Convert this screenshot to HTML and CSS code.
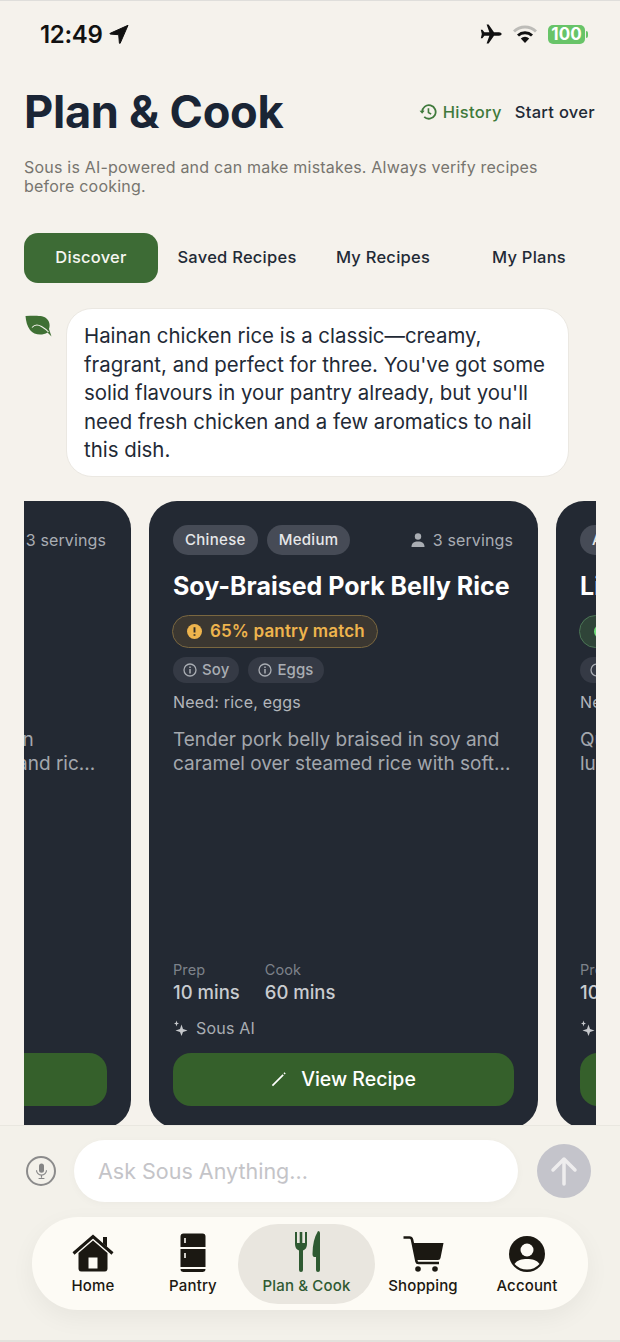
FILE: index.html
```html
<!DOCTYPE html>
<html lang="en">
<head>
<meta charset="utf-8">
<title>Plan &amp; Cook</title>
<link rel="stylesheet" href="styles.css">
</head>
<body>
<div class="screen">
  <div class="status">
    <div class="status-left">
      <span class="time">12:49</span>
      <svg class="loc" viewBox="0 0 20 20"><path d="M19 1.300 1.200 9.300q-.8.5.1.8l8.400.6.700 8.400q.3.900.8.1z" fill="#111" stroke="#111" stroke-width="1" stroke-linejoin="round"/></svg>
    </div>
    <div class="status-right">
      <svg class="plane" viewBox="0 0 22 20"><path d="M21.6 10c0-1-1.2-1.7-2.6-1.7h-5L8.600.4H6.600l2.800 7.900H4.400L2.400 5.700H.8l1 4.300-1 4.300h1.600l2-2.600h5L6.600 19.600h2L14 11.700h5c1.400 0 2.600-.7 2.600-1.700z" fill="#111"/></svg>
      <svg class="wifi" viewBox="0 0 24 18"><path d="M1 6.500A16 16 0 0 1 23 6.500" fill="none" stroke="#bdbcb8" stroke-width="3"/><path d="M5 10.500a10.500 10.500 0 0 1 14 0" fill="none" stroke="#111" stroke-width="3"/><path d="M12 18 7.800 13.500a6 6 0 0 1 8.400 0z" fill="#111"/></svg>
      <div class="battery"><span class="battery-body">100</span><span class="battery-nub"></span></div>
    </div>
  </div>

  <header class="head">
    <div class="head-row">
      <h1>Plan &amp; Cook</h1>
      <div class="head-actions">
        <a class="history">
          <svg class="history-icon" viewBox="0 0 20 20"><path d="M3.500 10a7.500 7.500 0 1 1 2.300 5.400" fill="none" stroke="#3f7a3c" stroke-width="2"/><path d="M.6 8.500h5.600L3.500 12z" fill="#3f7a3c"/><path d="M10.500 5.800v4.700l3 1.800" fill="none" stroke="#3f7a3c" stroke-width="1.800"/></svg>
          History
        </a>
        <a class="start-over">Start over</a>
      </div>
    </div>
    <p class="disclaimer">Sous is AI-powered and can make mistakes. Always verify recipes before cooking.</p>
  </header>

  <nav class="tabs">
    <a class="tab tab-active">Discover</a>
    <a class="tab">Saved Recipes</a>
    <a class="tab">My Recipes</a>
    <a class="tab">My Plans</a>
  </nav>

  <section class="chat">
    <svg class="leaf" viewBox="0 0 27 23"><path d="M.5 1C8 1 18-.5 22 4c3 3 3 7 2 10l2.500 7.500-4-4C17 21 9 20 5 15 2 11 1 6 .5 1z" fill="#3f7034"/><path d="M7 12.500C10 9 14 10 16.500 11.500 19 13 21 14 23.500 17" fill="none" stroke="#f5f2ec" stroke-width="1.100"/></svg>
    <p class="bubble">Hainan chicken rice is a classic—creamy, fragrant, and perfect for three. You've got some solid flavours in your pantry already, but you'll need fresh chicken and a few aromatics to nail this dish.</p>
  </section>

  <section class="carousel">
    <article class="card card-first">
      <div class="card-top">
        <div class="chips"><span class="chip">Chinese</span><span class="chip">Medium</span></div>
        <span class="servings"><svg class="person" viewBox="0 0 14 14"><circle cx="7" cy="3.500" r="3.200" fill="#a9adb3"/><path d="M.5 14c0-4 2.500-5.500 6.500-5.500s6.500 1.500 6.500 5.500z" fill="#a9adb3"/></svg>3 servings</span>
      </div>
      <h2>Hainan Chicken Rice</h2>
      <div class="match match-green"><span class="match-dot match-dot-green"></span>90% pantry match</div>
      <div class="allergens"><span class="allergen">Soy</span></div>
      <p class="need">Need: chicken, ginger</p>
      <p class="desc">Soft poached chicken, golden<br>with ginger-scallion sauces and ric...</p>
      <div class="times">
        <div class="time-col"><span class="time-label">Prep</span><span class="time-value">15 mins</span></div>
        <div class="time-col"><span class="time-label">Cook</span><span class="time-value">45 mins</span></div>
      </div>
      <div class="source">Sous AI</div>
      <a class="view">View Recipe</a>
    </article>

    <article class="card">
      <div class="card-top">
        <div class="chips"><span class="chip">Chinese</span><span class="chip">Medium</span></div>
        <span class="servings"><svg class="person" viewBox="0 0 14 14"><circle cx="7" cy="3.500" r="3.200" fill="#a9adb3"/><path d="M.5 14c0-4 2.500-5.500 6.500-5.500s6.500 1.500 6.500 5.500z" fill="#a9adb3"/></svg>3 servings</span>
      </div>
      <h2>Soy-Braised Pork Belly Rice</h2>
      <div class="match"><svg class="match-icon" viewBox="0 0 16 16"><circle cx="8" cy="8" r="8" fill="#eeb44d"/><path d="M8 3.500v5.500M8 11v1.500" stroke="#2f2c27" stroke-width="2"/></svg>65% pantry match</div>
      <div class="allergens">
        <span class="allergen"><svg class="info" viewBox="0 0 14 14"><circle cx="7" cy="7" r="6" fill="none" stroke="#a9adb3" stroke-width="1.300"/><path d="M7 6v4.500M7 3.500v1.400" stroke="#a9adb3" stroke-width="1.500"/></svg>Soy</span>
        <span class="allergen"><svg class="info" viewBox="0 0 14 14"><circle cx="7" cy="7" r="6" fill="none" stroke="#a9adb3" stroke-width="1.300"/><path d="M7 6v4.500M7 3.500v1.400" stroke="#a9adb3" stroke-width="1.500"/></svg>Eggs</span>
      </div>
      <p class="need">Need: rice, eggs</p>
      <p class="desc">Tender pork belly braised in soy and caramel over steamed rice with soft...</p>
      <div class="times">
        <div class="time-col"><span class="time-label">Prep</span><span class="time-value">10 mins</span></div>
        <div class="time-col"><span class="time-label">Cook</span><span class="time-value">60 mins</span></div>
      </div>
      <div class="source"><svg class="spark" viewBox="0 0 16 16"><path d="M8.500 4.500 10 9l4.500 1.500L10 12l-1.500 4L7 12l-4.500-1.500L7 9z" fill="#c6c8cc"/><path d="M3.500.5 4.200 2.800 6 3.500 4.200 4.200 3.500 6.500 2.800 4.200 1 3.500 2.800 2.800z" fill="#c6c8cc"/></svg>Sous AI</div>
      <a class="view"><svg class="pen" viewBox="0 0 16 16"><path d="M1.500 14.500 13 3" stroke="#fff" stroke-width="1.800"/><path d="M14 2l1-1" stroke="#fff" stroke-width="1.800"/></svg>View Recipe</a>
    </article>

    <article class="card">
      <div class="card-top">
        <div class="chips"><span class="chip">Asian</span><span class="chip">Easy</span></div>
      </div>
      <h2>Light Sesame Noodles</h2>
      <div class="match match-green"><span class="match-dot match-dot-green"></span>82% pantry match</div>
      <div class="allergens"><span class="allergen"><svg class="info" viewBox="0 0 14 14"><circle cx="7" cy="7" r="6" fill="none" stroke="#a9adb3" stroke-width="1.300"/><path d="M7 6v4.500M7 3.500v1.400" stroke="#a9adb3" stroke-width="1.500"/></svg>Soy</span></div>
      <p class="need">Need: noodles</p>
      <p class="desc">Quick and fragrant noodles with a<br>luscious toasted sesame glaze.</p>
      <div class="times">
        <div class="time-col"><span class="time-label">Prep</span><span class="time-value">10 mins</span></div>
        <div class="time-col"><span class="time-label">Cook</span><span class="time-value">20 mins</span></div>
      </div>
      <div class="source"><svg class="spark" viewBox="0 0 16 16"><path d="M8.500 4.500 10 9l4.500 1.500L10 12l-1.500 4L7 12l-4.500-1.500L7 9z" fill="#c6c8cc"/><path d="M3.500.5 4.200 2.800 6 3.500 4.200 4.200 3.500 6.500 2.800 4.200 1 3.500 2.800 2.800z" fill="#c6c8cc"/></svg>Sous AI</div>
      <a class="view">View Recipe</a>
    </article>
  </section>

  <footer class="dock">
    <div class="composer">
      <span class="mic">
        <svg class="mic-icon" viewBox="0 0 18 20"><rect x="6" y="1" width="6" height="11" rx="3" fill="#858585"/><path d="M3 9a6 6 0 0 0 12 0M9 15v3M5.500 19h7" fill="none" stroke="#858585" stroke-width="1.400"/></svg>
      </span>
      <div class="field">Ask Sous Anything...</div>
      <span class="send">
        <svg class="send-icon" viewBox="0 0 28 30"><path d="M14 28V3M3 14 14 3l11 11" fill="none" stroke="#eeedee" stroke-width="3.500" stroke-linecap="round" stroke-linejoin="round"/></svg>
      </span>
    </div>
    <nav class="bottom-nav">
      <a class="nav-item nav-home">
        <svg class="nav-icon" width="42" height="38" viewBox="0 0 42 38"><path d="M21 6.500 35.500 19v15.500q0 3-3 3h-23q-3 0-3-3V19zM16.500 23.500v11h9v-11z" fill-rule="evenodd" fill="#1b1812"/><path d="M1.500 19.500 21 2.500l19.500 17" fill="none" stroke="#1b1812" stroke-width="3"/><path d="M31 3h4v10l-4-3.500z" fill="#1b1812"/></svg>
        <span>Home</span>
      </a>
      <a class="nav-item nav-pantry">
        <svg class="nav-icon" width="26" height="39" viewBox="0 0 26 39"><path d="M.5 14V3.500Q.5.500 3.500.5h19q3 0 3 3V14zM.5 16h25v18H.5zM.5 36h25q0 3-3 3h-19q-3 0-3-3z" fill="#1b1812"/><path d="M5 5v5M5 20v5" stroke="#fdfbf5" stroke-width="1.600"/></svg>
        <span>Pantry</span>
      </a>
      <a class="nav-item nav-plan">
        <svg class="nav-icon" width="26" height="41" viewBox="0 0 26 41"><path d="M1 1v12q0 5 4 6.500V39q0 2 2 2t2-2V19.500q4-1.500 4-6.500V1h-2v11H8.300V1H5.700v11H3V1zM24 0q2 0 2 2v37q0 2-2 2t-2-2V26h-1.500q-2 0-2-3 0-14 5.500-23z" fill="#2f5a32"/></svg>
        <span>Plan &amp; Cook</span>
      </a>
      <a class="nav-item nav-shopping">
        <svg class="nav-icon" width="41" height="36" viewBox="0 0 41 36"><path d="M.5 1.500h6q2 0 2.500 2l4.500 22q.3 1.500 2 1.500h20.500" fill="none" stroke="#1b1812" stroke-width="2.600"/><path d="M9.500 7h31l-3 15q-.3 2-2.500 2H13.500z" fill="#1b1812"/><circle cx="15" cy="33" r="2.800" fill="#1b1812"/><circle cx="32" cy="33" r="2.800" fill="#1b1812"/></svg>
        <span>Shopping</span>
      </a>
      <a class="nav-item nav-account">
        <svg class="nav-icon" width="36" height="36" viewBox="0 0 36 36"><circle cx="18" cy="18" r="18" fill="#1b1812"/><circle cx="18" cy="14" r="6.500" fill="#fdfbf5"/><path d="M5.500 28C8 24 13 23 18 23s10 1 12.500 5Q25.500 33.500 18 33.500T5.500 28z" fill="#fdfbf5"/></svg>
        <span>Account</span>
      </a>
    </nav>
  </footer>
</div>
</body>
</html>
```

FILE: styles.css
```css
* { box-sizing: border-box; }
html, body { margin: 0; padding: 0; }
body {
  background: #f5f2ec;
  font-family: "Inter", "Liberation Sans", sans-serif;
  color: #1a2535;
}
p, h1, h2 { margin: 0; }

.screen {
  height: 1342px;
  display: flex;
  flex-direction: column;
  overflow: hidden;
  border-top: 1px solid #dfdedb;
}

/* status bar */
.status {
  display: flex;
  justify-content: space-between;
  align-items: center;
  height: 34px;
  margin-top: 16px;
  padding: 0 32px 0 40px;
}
.status-left { display: flex; align-items: center; gap: 6px; }
.time { font-size: 24px; font-weight: 600; letter-spacing: -.3px; color: #111; }
.loc { width: 20px; height: 20px; }
.status-right { display: flex; align-items: center; gap: 11px; }
.plane { width: 22px; height: 20px; }
.wifi { width: 24px; height: 18px; }
.battery { display: flex; align-items: center; gap: 1px; }
.battery-body {
  width: 37px;
  height: 19px;
  background: #68c468;
  border-radius: 5px;
  color: #fff;
  font-size: 17px;
  font-weight: 700;
  line-height: 19px;
  text-align: center;
}
.battery-nub { width: 2px; height: 7px; background: #68c468; border-radius: 0 2px 2px 0; }

/* header */
.head { padding: 0 24px; }
.head-row {
  display: flex;
  justify-content: space-between;
  align-items: center;
  margin-top: 28px;
}
h1 { font-size: 45.200px; line-height: 66px; font-weight: 700; letter-spacing: -.3px; color: #1a2535; }
.head-actions { display: flex; align-items: center; gap: 13px; font-size: 16.500px; font-weight: 500; letter-spacing: .3px; margin-right: 1px; }
.history { display: flex; align-items: center; gap: 6px; color: #3f7a3c; }
.history-icon { width: 18px; height: 18px; }
.start-over { color: #1f2a36; }
.disclaimer {
  margin-top: 13px;
  padding-right: 30px;
  font-size: 16px;
  line-height: 19px;
  letter-spacing: .21px;
  color: #77756f;
}

/* tabs */
.tabs { display: flex; gap: 12px; margin-top: 37px; padding: 0 24px; }
.tab {
  flex: 1;
  height: 50px;
  line-height: 48px;
  text-align: center;
  border-radius: 14px;
  font-size: 16.500px;
  font-weight: 500;
  letter-spacing: .25px;
  color: #1f2a36;
  white-space: nowrap;
}
.tab-active { background: #3d6b35; color: #f6f6f0; }

/* chat */
.chat { display: flex; gap: 14px; margin-top: 25px; padding: 0 51px 0 25px; }
.leaf { width: 27px; height: 23px; flex: none; margin-top: 7px; }
.bubble {
  flex: 1;
  background: #fff;
  border: 1px solid #ebe8e2;
  border-radius: 26px;
  padding: 13px 16px 11px 17px;
  font-size: 20.400px;
  line-height: 28.500px;
  color: #1f2a36;
}

/* carousel */
.carousel {
  flex: 1;
  min-height: 0;
  display: flex;
  gap: 18px;
  margin: 24px 24px 0;
  overflow: hidden;
}
.card {
  flex: none;
  width: 389px;
  height: 627px;
  display: flex;
  flex-direction: column;
  padding: 24px;
  background: #232933;
  border-radius: 28px;
}
.card-first { margin-left: -282px; }
.card-top { display: flex; justify-content: space-between; align-items: center; height: 30px; }
.chips { display: flex; gap: 9px; }
.chip {
  height: 30px;
  padding: 0 12px;
  line-height: 30px;
  border-radius: 15px;
  background: #464b56;
  color: #e6e7e9;
  font-size: 15px;
  font-weight: 500;
  letter-spacing: .3px;
}
.servings { display: flex; align-items: center; gap: 8px; margin-right: 1px; font-size: 16px; letter-spacing: .12px; color: #a9adb3; }
.person { width: 14px; height: 14px; }
h2 {
  margin-top: 13px;
  font-size: 25px;
  line-height: 36px;
  font-weight: 650;
  color: #fff;
  white-space: nowrap;
}
.match {
  align-self: flex-start;
  display: flex;
  align-items: center;
  gap: 8px;
  height: 33px;
  margin-top: 11px;
  margin-left: -1px;
  padding: 0 12px 0 14px;
  border: 1px solid #7a6740;
  border-radius: 17px;
  background: #3b3731;
  color: #eeb44d;
  font-size: 17px;
  font-weight: 600;
  letter-spacing: .15px;
  white-space: nowrap;
}
.match-green { background: #2f4438; border-color: #4c7656; color: #6fdc7a; }
.match-icon { width: 15px; height: 15px; }
.match-dot { width: 15px; height: 15px; border-radius: 50%; }
.match-dot-green { background: #6fdc7a; }
.allergens { display: flex; gap: 9px; margin-top: 9px; }
.allergen {
  display: flex;
  align-items: center;
  gap: 5px;
  height: 26px;
  padding: 0 10px;
  border-radius: 13px;
  background: #353a45;
  color: #a9adb3;
  font-size: 15px;
  font-weight: 500;
  letter-spacing: .1px;
}
.info { width: 14px; height: 14px; }
.need { margin-top: 8px; font-size: 16px; line-height: 22px; letter-spacing: .2px; color: #b3b6bb; }
.desc { margin-top: 15px; font-size: 19px; line-height: 24px; color: #a3a7ad; }
.times { display: flex; gap: 25px; margin-top: auto; }
.time-col { display: flex; flex-direction: column; }
.time-label { font-size: 14.500px; line-height: 20px; letter-spacing: .1px; color: #7d828a; }
.time-value { font-size: 18.500px; line-height: 25px; font-weight: 500; color: #c9ccd0; }
.source {
  display: flex;
  align-items: center;
  gap: 7px;
  height: 24px;
  margin-top: 11px;
  font-size: 16px;
  letter-spacing: .2px;
  color: #a9adb3;
}
.spark { width: 16px; height: 16px; }
.view {
  display: flex;
  align-items: center;
  justify-content: center;
  gap: 15px;
  height: 53px;
  margin-top: 13px;
  margin-bottom: -2px;
  border-radius: 18px;
  background: #35602b;
  color: #fff;
  font-size: 19.500px;
  font-weight: 500;
}
.pen { width: 15px; height: 15px; }

/* dock */
.dock {
  flex: none;
  height: 217px;
  background: #f3f1ea;
  border-top: 1px solid #e9e7e0;
  border-bottom: 2px solid #e3e1dc;
}
.composer {
  display: flex;
  align-items: center;
  gap: 18px;
  height: 62px;
  margin-top: 14px;
  padding: 0 29px 0 26px;
}
.mic {
  flex: none;
  width: 30px;
  height: 30px;
  display: flex;
  align-items: center;
  justify-content: center;
  border: 2px solid #8b8b8b;
  border-radius: 50%;
}
.mic-icon { width: 15px; height: 18px; }
.field {
  flex: 1;
  height: 62px;
  padding-left: 24px;
  line-height: 62px;
  background: #fff;
  border-radius: 31px;
  box-shadow: 0 2px 8px rgba(0, 0, 0, .03);
  color: #c4c4c8;
  font-size: 21.500px;
}
.send {
  flex: none;
  width: 54px;
  height: 54px;
  margin-left: 1px;
  display: flex;
  align-items: center;
  justify-content: center;
  border-radius: 50%;
  background: #c4c4cb;
}
.send-icon { width: 28px; height: 30px; }
.bottom-nav {
  display: flex;
  height: 93px;
  margin: 15px 32px 0;
  padding: 7px 0 6px 20px;
  background: #fdfbf5;
  border-radius: 46px;
  box-shadow: 0 8px 24px rgba(0, 0, 0, .05);
}
.nav-item {
  flex: none;
  display: flex;
  flex-direction: column;
  align-items: center;
  justify-content: flex-end;
  gap: 4px;
  padding-bottom: 9px;
  font-size: 15px;
  font-weight: 500;
  letter-spacing: .15px;
  color: #1b1812;
  white-space: nowrap;
}
.nav-home { width: 82px; }
.nav-pantry { width: 82px; margin-left: 18px; }
.nav-plan { width: 137px; margin-left: 4px; background: #e9e6df; border-radius: 40px; color: #2f5a32; }
.nav-shopping { width: 86px; margin-left: 5px; }
.nav-account { width: 74px; margin-left: 24px; }
.nav-icon { flex: none; }
```
